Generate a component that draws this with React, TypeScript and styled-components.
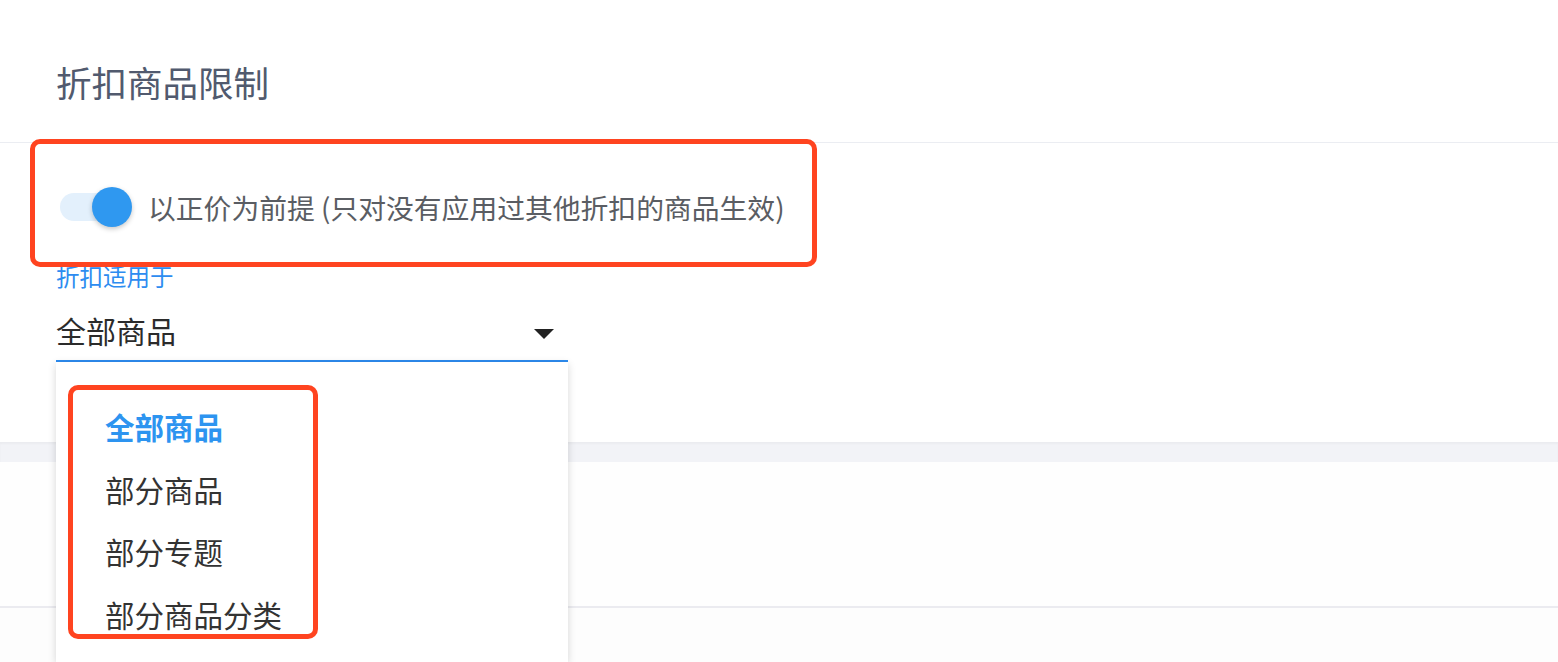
import styled, { createGlobalStyle } from "styled-components";

const GlobalStyle = createGlobalStyle`
  html, body {
    margin: 0;
    padding: 0;
    background: #ffffff;
  }
  body {
    font-family: "Noto Sans CJK SC", "Noto Sans", sans-serif;
    overflow: hidden;
  }
`

const Page = styled.div`
  display: flex;
  flex-direction: column;
  height: 662px;
  overflow: hidden;
`
const Card = styled.section`
  background: #ffffff;
`
const Header = styled.div`
  padding: 62px 56px 40px;
  border-bottom: 1px solid #ebedf2;
`
const Title = styled.h2`
  margin: 0;
  font-size: 35.5px;
  line-height: 40px;
  font-weight: 400;
  color: #515a6e;
`
const Body = styled.div`
  padding: 44px 56px 80px;
  display: flex;
  flex-direction: column;
  align-items: flex-start;
`
const Annotate = styled.div<{ $top: number; $left: number; $width: number; $height: number }>`
  position: absolute;
  top: ${p => p.$top}px;
  left: ${p => p.$left}px;
  width: ${p => p.$width}px;
  height: ${p => p.$height}px;
  box-sizing: border-box;
  border: 5px solid #ff4420;
  border-radius: 10px;
  pointer-events: none;
  z-index: 5;
`
const SwitchRow = styled.label`
  position: relative;
  display: inline-flex;
  align-items: center;
  gap: 16px;
  margin-left: 4px;
  height: 40px;
`
const Switch = styled.span`
  position: relative;
  display: inline-block;
  width: 72px;
  height: 40px;
`
const Track = styled.span`
  position: absolute;
  left: 0;
  top: 6px;
  width: 60px;
  height: 28px;
  border-radius: 14px;
  background: #e3f0fc;
`
const Knob = styled.span`
  position: absolute;
  right: 0;
  top: 0;
  width: 40px;
  height: 40px;
  border-radius: 50%;
  background: #2f98f0;
  box-shadow: 0 2px 5px rgba(0, 0, 0, 0.22);
`
const SwitchText = styled.span`
  font-size: 27.8px;
  line-height: 40px;
  color: #5a5d63;
  white-space: nowrap;
`
const FieldLabel = styled.div`
  margin-top: 34px;
  font-size: 23.5px;
  line-height: 30px;
  color: #2d8cf0;
`
const Select = styled.div`
  position: relative;
  width: 512px;
  box-sizing: border-box;
  padding: 19px 14px 10px 0;
  border-bottom: 2px solid #2d8cf0;
  display: flex;
  align-items: center;
  justify-content: space-between;
`
const Value = styled.span`
  font-size: 30px;
  line-height: 40px;
  color: #2b2b2b;
`
const Caret = styled.span`
  width: 0;
  height: 0;
  margin-top: 8px;
  border-left: 10px solid transparent;
  border-right: 10px solid transparent;
  border-top: 10px solid #222;
`
const Menu = styled.div`
  position: absolute;
  top: calc(100% + 2px);
  left: 0;
  width: 512px;
  height: 300px;
  background: #ffffff;
  box-shadow: 0 2px 8px rgba(0, 0, 0, 0.16);
  padding-top: 33px;
  box-sizing: border-box;
  z-index: 4;
`
const Item = styled.div<{ $active?: boolean }>`
  padding-left: 49px;
  height: 62.5px;
  line-height: 62.5px;
  font-size: 29.5px;
  color: ${p => (p.$active ? "#2d94f0" : "#333333")};
  font-weight: ${p => (p.$active ? 700 : 400)};
`
const Gap = styled.div`
  height: 20px;
  background: #f2f3f7;
  box-shadow: inset 0 2px 2px rgba(0, 0, 0, 0.03);
`
const PlainCard = styled.section`
  height: 144px;
  flex-shrink: 0;
  background: #fefefe;
  border-bottom: 2px solid #ebebf0;
`
const Rest = styled.section`
  flex: 1;
  background: #fdfdfd;
`

const options = ["全部商品", "部分商品", "部分专题", "部分商品分类"]

const App = () => {
    return (
        <Page>
            <GlobalStyle/>
            <Card>
                <Header>
                    <Title>折扣商品限制</Title>
                </Header>
                <Body>
                    <SwitchRow>
                        <Switch>
                            <Track/>
                            <Knob/>
                        </Switch>
                        <SwitchText>以正价为前提 (只对没有应用过其他折扣的商品生效)</SwitchText>
                        <Annotate $top={-48} $left={-30} $width={787} $height={128}/>
                    </SwitchRow>
                    <FieldLabel>折扣适用于</FieldLabel>
                    <Select>
                        <Value>全部商品</Value>
                        <Caret/>
                        <Menu>
                            {options.map((o, i) => (
                                <Item key={o} $active={i === 0}>{o}</Item>
                            ))}
                            <Annotate $top={23} $left={12} $width={250} $height={254}/>
                        </Menu>
                    </Select>
                </Body>
            </Card>
            <Gap/>
            <PlainCard/>
            <Rest/>
        </Page>
    );
};
export default App;
